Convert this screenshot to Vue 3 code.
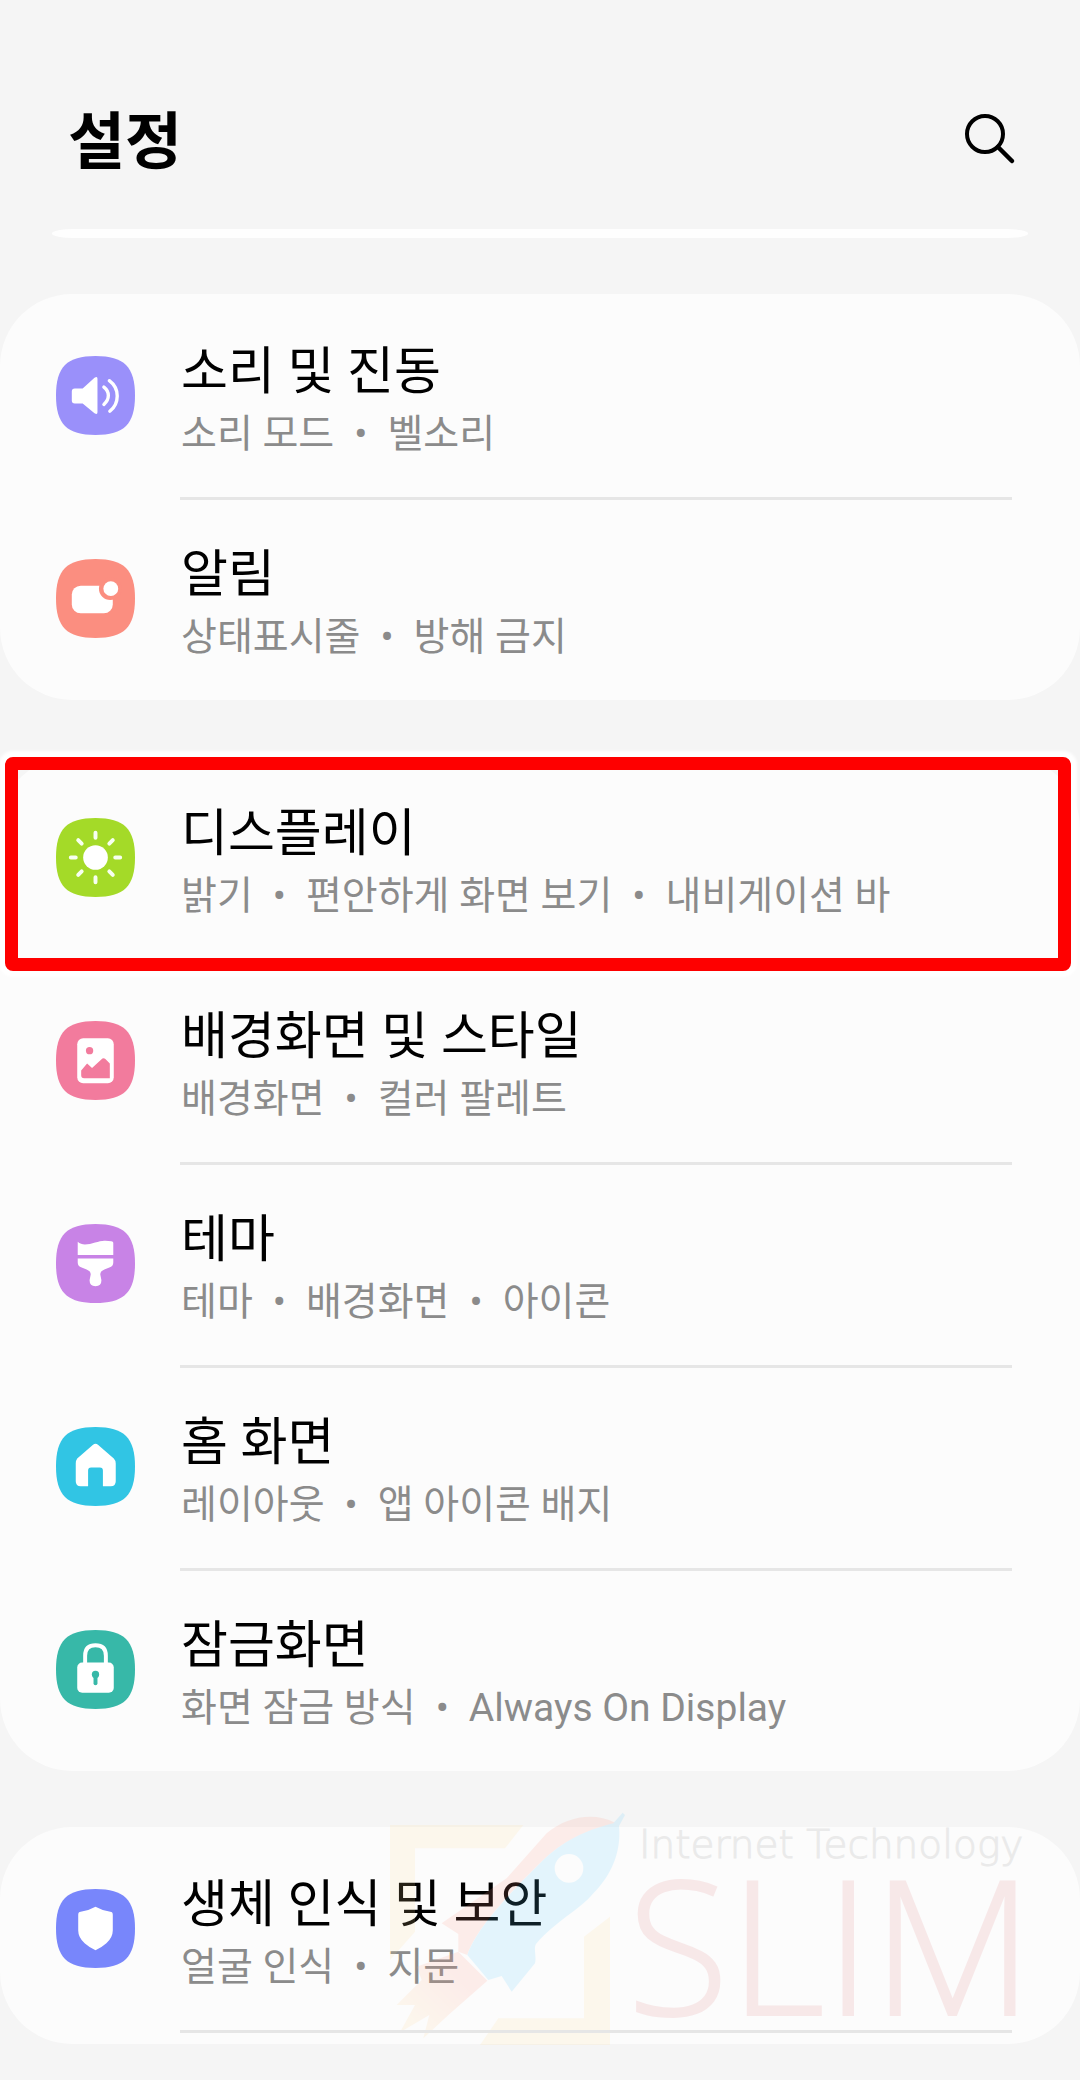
<script setup>
const groups = [
  [
    { icon: 'sound', color: '#9a90fa', title: '소리 및 진동', details: ['소리 모드', '벨소리'] },
    { icon: 'notice', color: '#fb8e80', title: '알림', details: ['상태표시줄', '방해 금지'] },
  ],
  [
    { icon: 'sun', color: '#a4da28', title: '디스플레이', details: ['밝기', '편안하게 화면 보기', '내비게이션 바'], marked: true },
    { icon: 'picture', color: '#f27b9d', title: '배경화면 및 스타일', details: ['배경화면', '컬러 팔레트'] },
    { icon: 'brush', color: '#c883e6', title: '테마', details: ['테마', '배경화면', '아이콘'] },
    { icon: 'home', color: '#31c5e4', title: '홈 화면', details: ['레이아웃', '앱 아이콘 배지'] },
    { icon: 'lock', color: '#37b8a8', title: '잠금화면', details: ['화면 잠금 방식', 'Always On Display'] },
  ],
  [
    { icon: 'shield', color: '#7886fb', title: '생체 인식 및 보안', details: ['얼굴 인식', '지문'] },
  ],
]
</script>

<template>
  <div class="page">
    <header class="header">
      <h1 class="heading">설정</h1>
      <button class="search" type="button" aria-label="검색">
        <svg viewBox="0 0 52 52" fill="none" stroke="#000" aria-hidden="true">
          <circle cx="21" cy="21" r="18" stroke-width="4" />
          <path d="M34 34 L48 48" stroke-width="4.5" stroke-linecap="round" />
        </svg>
      </button>
    </header>

    <main class="content">
      <div class="card-edge"></div>

      <section v-for="(group, g) in groups" :key="g" class="card" :class="{ last: g === groups.length - 1 }">
        <ul class="list">
          <li v-for="item in group" :key="item.title" class="item">
            <a class="row" href="#">
              <svg class="icon" viewBox="0 0 80 80" aria-hidden="true">
                <path :fill="item.color" d="M40 0 C69 0 80 11 80 40 C80 69 69 80 40 80 C11 80 0 69 0 40 C0 11 11 0 40 0 Z" />
                <g v-if="item.icon === 'sound'" fill="#fff">
                  <path d="M19 33 H27 L39 22 Q42 20 42 23 V57 Q42 60 39 58 L27 48 H19 Q16 48 16 45 V36 Q16 33 19 33 Z" />
                  <path d="M48.500 31.500 Q53 35 53 40 Q53 45 48.500 49" fill="none" stroke="#fff" stroke-width="3.400" stroke-linecap="round" />
                  <path d="M54 25 Q62 31 62 40.500 Q62 50 54.500 56" fill="none" stroke="#fff" stroke-width="3.400" stroke-linecap="round" />
                </g>
                <g v-else-if="item.icon === 'notice'">
                  <rect x="16" y="27" width="41.500" height="28" rx="9" fill="#fff" />
                  <circle cx="55" cy="30" r="11.500" :fill="item.color" />
                  <circle cx="55.500" cy="30" r="7.500" fill="#fff" />
                </g>
                <g v-else-if="item.icon === 'sun'">
                  <circle cx="40" cy="40" r="12.500" fill="#fff" />
                  <path d="M40 15 V20 M40 60 V65 M15 40 H20 M60 40 H65 M22.500 22.500 L26 26 M54 54 L57.500 57.500 M22.500 57.500 L26 54 M54 26 L57.500 22.500" stroke="#f7fff0" stroke-width="4" stroke-linecap="round" />
                </g>
                <g v-else-if="item.icon === 'picture'">
                  <rect x="21.500" y="17.500" width="37" height="45.500" rx="6" fill="#fff" />
                  <circle cx="34" cy="30" r="3.700" :fill="item.color" />
                  <path :fill="item.color" d="M25.500 50 L31.500 43 L36.500 47.500 L47 38 Q48.500 37 50 38.500 L54.500 43 V58 H28.500 Q25.500 58 25.500 55 Z" />
                </g>
                <g v-else-if="item.icon === 'brush'" fill="#fff">
                  <path d="M22 18 C29 25 43 16 50 17 Q58 17 58 19 V31.500 H22 Z" />
                  <path d="M22 35 H58 V39 Q58 43 54 44 L49 46 Q44 48 45 52 L46 57 Q46 63 40 63 Q34 63 34 57 L35 52 Q36 48 31 46 L26 44 Q22 43 22 39 Z" />
                </g>
                <path v-else-if="item.icon === 'home'" fill="#fff" d="M37.500 18 Q40 16 42.500 18 L58.500 32 Q60.500 34 60.500 37 V55 Q60.500 60 55.500 60 H47.500 V44 Q47.500 41 44.500 41 H35.500 Q32.500 41 32.500 44 V60 H25 Q20 60 20 55 V37 Q20 34 21.500 32 Z" />
                <g v-else-if="item.icon === 'lock'">
                  <path d="M29.500 35 V26 Q29.500 15.500 40 15.500 Q50.500 15.500 50.500 26 V35" fill="none" stroke="#fff" stroke-width="4" />
                  <rect x="21.500" y="33" width="37" height="30.500" rx="5" fill="#fff" />
                  <circle cx="40" cy="45" r="3.700" :fill="item.color" />
                  <path d="M40 46 V54" :stroke="item.color" stroke-width="4" stroke-linecap="round" />
                </g>
                <path v-else fill="#fff" d="M40 18 Q47 22 55 23 Q57.500 23 57.500 26 V42 Q57.500 49 51 55 Q46 59.500 40 62 Q34 59.500 29 55 Q22.500 49 22.500 42 V26 Q22.500 23 25 23 Q33 22 40 18 Z" />
              </svg>
              <span class="texts">
                <span class="title">{{ item.title }}</span>
                <span class="detail"><template v-for="(part, i) in item.details" :key="part"><span v-if="i" class="dot">•</span>{{ part }}</template></span>
              </span>
            </a>
            <div v-if="item.marked" class="marker"></div>
          </li>
        </ul>

        <div v-if="g === groups.length - 1" class="watermark">
          <svg class="rocket" viewBox="21 90 720 720" aria-hidden="true">
            <defs>
              <linearGradient id="flame" x1="1" y1="0" x2="0" y2="1">
                <stop offset="0.300" stop-color="#ff9684" />
                <stop offset="0.800" stop-color="#fdd696" />
              </linearGradient>
            </defs>
            <path fill="#fdde96" d="M30 135 H430 L375 205 H105 V455 L30 540 Z M690 410 V795 H300 L355 715 H612 V470 Z" />
            <path fill="#ff9684" d="M705 128 C640 95 560 110 500 160 L380 295 L185 430 L235 462 V515 L262 525 C290 440 400 330 480 250 C550 180 620 150 705 140 Z" />
            <path fill="#5ccdff" fill-rule="evenodd" d="M700 130 L728 98 L735 105 L717 138 C725 220 690 290 640 340 C600 390 530 420 468 492 C460 505 470 530 465 550 L395 635 L365 588 L325 600 L262 525 C290 440 400 330 480 250 C550 180 620 150 700 130 Z M610 265 A43 43 0 1 0 524 265 A43 43 0 1 0 610 265 Z" />
            <path fill="url(#flame)" d="M235 515 L322 602 L205 705 L130 775 L148 705 L60 757 L105 675 L50 675 L125 600 L110 560 Z" />
          </svg>
          <div class="brand">
            <span class="tagline">Internet Technology</span>
            <span class="name">SLIM</span>
          </div>
        </div>
      </section>
    </main>
  </div>
</template>

<style>
body {
  background: #f5f5f5;
}
</style>

<style scoped>
.page {
  min-height: 100vh;
  overflow: hidden;
  background: #f5f5f5;
  color: #000;
  font-family: Roboto, "Noto Sans CJK KR", sans-serif;
}

.header {
  display: flex;
  align-items: center;
  justify-content: space-between;
  padding: 91px 64px 86px 68px;
}

.heading {
  margin: 0;
  padding-top: 8px;
  font-size: 62px;
  font-weight: 700;
  line-height: 88px;
}

.search {
  width: 52px;
  height: 52px;
  padding: 0;
  border: 0;
  background: none;
}

.search svg {
  display: block;
  width: 100%;
}

.content {
  display: flex;
  flex-direction: column;
  gap: 56px;
}

.card-edge {
  height: 9px;
  margin: -44px 52px 0;
  border-radius: 24px / 5px;
  background: #fefefe;
}

.card {
  position: relative;
  border-radius: 72px;
  background: #fcfcfc;
}

.last {
  padding-bottom: 14px;
}

.last::after {
  content: "";
  position: absolute;
  left: 180px;
  right: 68px;
  bottom: 11px;
  height: 3px;
  background: #e6e6e6;
}

.list {
  margin: 0;
  padding: 0;
  list-style: none;
}

.item {
  position: relative;
}

.item + .item::before {
  content: "";
  position: absolute;
  top: 0;
  left: 180px;
  right: 68px;
  height: 3px;
  background: #e6e6e6;
}

.row {
  display: flex;
  align-items: center;
  gap: 46px;
  height: 203px;
  padding: 0 56px;
  color: inherit;
  text-decoration: none;
}

.icon {
  flex: none;
  width: 79px;
  height: 79px;
}

.texts {
  display: flex;
  flex-direction: column;
  padding-top: 8px;
}

.title {
  font-size: 51px;
  line-height: 68px;
}

.detail {
  color: #8b8b8b;
  font-size: 39px;
  line-height: 56px;
}

.dot {
  margin: 0 20px;
}

.marker {
  position: absolute;
  z-index: 1;
  inset: 1px 9px -12px 5px;
  border: 13px solid #fe0000;
  border-radius: 8px;
  box-shadow: 0 0 3px 6px #fff;
}

.watermark {
  position: absolute;
  top: -17px;
  right: 53px;
  display: flex;
  opacity: 0.15;
  pointer-events: none;
}

.rocket {
  width: 240px;
  height: 240px;
}

.brand {
  display: flex;
  flex-direction: column;
  width: 400px;
  padding-top: 11px;
  white-space: nowrap;
}

.tagline {
  padding-left: 12px;
  color: #888;
  font-family: "DejaVu Sans", sans-serif;
  font-size: 39px;
  font-weight: 200;
  line-height: 48px;
  -webkit-text-stroke: 1px #888;
}

.name {
  color: #e07a7e;
  font-family: "Open Sans", sans-serif;
  font-size: 187px;
  font-weight: 300;
  line-height: 148px;
  -webkit-text-stroke: 2px #e07a7e;
}
</style>
